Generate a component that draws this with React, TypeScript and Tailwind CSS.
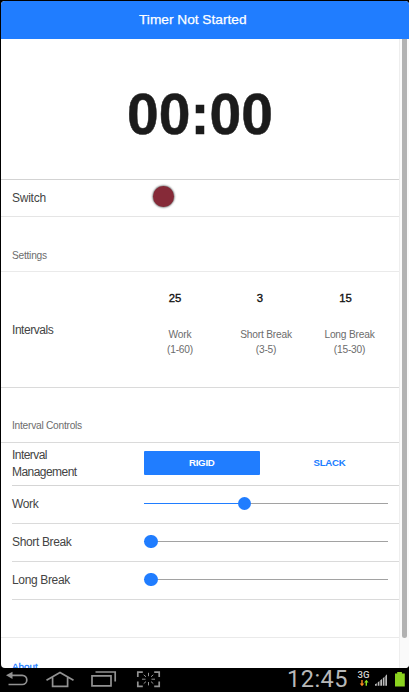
import type { ReactNode } from "react";

function Slider({ value }: { value: number }) {
  return (
    <div className="relative mt-[11px] h-[14px] w-[244px]">
      <div className="absolute top-[6px] h-px w-full bg-[#a2a2a2]" />
      <div className="absolute top-[6px] h-px bg-[#207dff]" style={{ width: value + 7 }} />
      <div className="absolute top-[-0.3px] size-[13.5px] rounded-full bg-[#207dff]" style={{ left: value }} />
    </div>
  );
}

function SliderRow({ label, value }: { label: string; value: number }) {
  return (
    <div className="ml-[11px] flex h-[38px] border-b border-[#dadada]">
      <div className="w-[132px] pt-[10px] text-[12px] leading-4 tracking-[-0.35px] text-[#444]">{label}</div>
      <Slider value={value} />
    </div>
  );
}

function SectionTitle({ children, className }: { children: ReactNode; className: string }) {
  return <div className={`pl-[11px] text-[10.2px] leading-3 tracking-[-0.25px] text-[#6c6c6c] ${className}`}>{children}</div>;
}

function Interval({ value, name, range, className, valueClass }: { value: string; name: string; range: string; className: string; valueClass: string }) {
  return (
    <div className={`text-center ${className}`}>
      <div className={`text-[11.3px] leading-[14px] text-[#111] [-webkit-text-stroke:0.35px_#111] ${valueClass}`}>{value}</div>
      <div className="mt-[23px] text-[10.2px] leading-[14.5px] tracking-[-0.2px] whitespace-nowrap text-[#6c6c6c]">
        {name}
        <br />
        {range}
      </div>
    </div>
  );
}

function NavIcons() {
  return (
    <svg className="h-6 w-[170px]" viewBox="0 0 170 24" fill="none" stroke="#929292" strokeWidth="1.7">
      <path d="M10 7.3h12.2a4.6 4.6 0 0 1 0 9.2H8.5" />
      <path d="M6 7.3l6.5-3.6v7.2z" fill="#929292" stroke="none" />
      <path d="M46.5 12.3L60 4.5l13.5 7.8M52.6 9.5v8.8h15V9.5" />
      <path d="M92 7.8h19v10H92zM95.5 4h19.7v9.5" />
      <path d="M137.8 9V4.1h5M154.2 4.1h5V9M137.8 13.5v4.8h5M154.2 18.3h5v-4.8" />
      <path d="M148.5 4.8v3.4M148.5 14v3.4M142 11.2h3.5M151.5 11.2h3.5M143.7 6.8l2.3 2M153.3 6.8l-2.3 2M143.7 15.6l2.3-2M153.3 15.6l-2.3-2" strokeWidth="1" />
    </svg>
  );
}

function StatusIcons() {
  return (
    <svg className="h-6 w-[54px]" viewBox="355 0 54 24">
      <text x="357.6" y="10" fontSize="9.6" fill="#d0d0d0" fontFamily="Roboto, sans-serif" fontWeight="500">3G</text>
      <path d="M361.3 12h1.4v3.5h1.6l-2.3 2.7-2.3-2.7h1.6z" fill="#ff8b22" />
      <path d="M366.4 11.8l2.2 2.7H367v3.3h-1.4v-3.3h-1.5z" fill="#8ee01e" />
      <path d="M375 17.7v-1.4l1.8-1v2.4zM377.7 17.7v-3.2l1.7-1.4v4.6zM380.3 17.7v-5.4l1.7-1.4v6.8zM382.8 17.7v-7.5l1.7-1.5v9zM385.3 17.7V8l1.7-1.7v11.4z" fill="#bdbdbd" />
      <path d="M397.2 4h4.7v1.6h2.9v12.8H395V5.6h2.2z" fill="#8bd31f" />
    </svg>
  );
}

export default function App() {
  return (
    <div className="flex h-[692px] w-[409px] flex-col overflow-hidden bg-black font-['Liberation_Sans',Arial,sans-serif]">
      <div className="mt-px ml-px flex h-[667px] flex-col overflow-hidden rounded-[4px] bg-white">
        <header className="h-[38px] shrink-0 bg-[#207dff] pt-[11px] pl-[138px] text-[13.7px] leading-4 whitespace-nowrap text-white [-webkit-text-stroke:0.25px_white]">
          Timer Not Started
        </header>
        <div className="flex min-h-0 flex-1">
          <main className="w-[398px] overflow-hidden">
            <div className="h-[141px] border-b border-[#d3d3d3] pt-[43px] text-center text-[57px] leading-[64px] font-bold text-[#1b1b1b] [-webkit-text-stroke:0.5px_#1b1b1b]">
              00:00
            </div>
            <div className="flex h-[37px] border-b border-[#e5e5e5] pl-[11px]">
              <div className="w-[141px] pt-[10px] text-[12px] leading-4 tracking-[-0.25px] text-[#444]">Switch</div>
              <div className="mt-[6px] size-[21px] rounded-full bg-[#862a38] shadow-[0_0_2px_0.5px_rgba(0,0,0,0.6)]" />
            </div>
            <SectionTitle className="h-[55px] border-b border-[#eaeaea] pt-[33px]">Settings</SectionTitle>
            <div className="flex h-[116px] border-b border-[#dadada] pl-[11px]">
              <div className="w-[132px] pt-[50px] text-[12px] leading-4 tracking-[-0.45px] text-[#444]">Intervals</div>
              <div className="flex pt-[19px]">
                <Interval className="w-[72px]" valueClass="-translate-x-[5px]" value="25" name="Work" range="(1-60)" />
                <Interval className="w-[100px]" valueClass="-translate-x-[6px]" value="3" name="Short Break" range="(3-5)" />
                <Interval className="w-[67px]" valueClass="-translate-x-[4px]" value="15" name="Long Break" range="(15-30)" />
              </div>
            </div>
            <SectionTitle className="h-[55px] border-b border-[#dadada] pt-[32px]">Interval Controls</SectionTitle>
            <div className="ml-[11px] flex h-[43px] border-b border-[#d5d5d5]">
              <div className="w-[132px] pt-[4px] text-[12px] leading-[16.5px] tracking-[-0.55px] text-[#444]">
                Interval
                <br />
                Management
              </div>
              <div className="mt-[7.5px] flex h-[24.5px] text-center text-[9.7px] leading-[24.5px] font-bold tracking-[-0.25px]">
                <div className="w-[116.5px] rounded-[1px] bg-[#207dff] text-white">RIGID</div>
                <div className="w-[139px] text-[#207dff]">SLACK</div>
              </div>
            </div>
            <SliderRow label="Work" value={93.7} />
            <SliderRow label="Short Break" value={0} />
            <SliderRow label="Long Break" value={0} />
            <div className="h-[38px] border-b border-[#eaeaea]" />
            <div className="pt-[23px] pl-[11px] text-[9.8px] leading-3 text-[#207dff] [-webkit-text-stroke:0.3px_#207dff]">About</div>
          </main>
          <div className="flex w-[10px] justify-center border-l border-[#eee] bg-[#fafafa]">
            <div className="h-[599px] w-[5.5px] rounded-b-[3px] bg-[#b2b2b2]" />
          </div>
        </div>
      </div>
      <footer className="flex h-6 w-full shrink-0 items-start">
        <NavIcons />
        <div className="ml-[117px] w-[68px] font-[Roboto] text-[23.5px] leading-[23px] font-normal tracking-[0.5px] whitespace-nowrap text-[#b8b8b8]">12:45</div>
        <StatusIcons />
      </footer>
    </div>
  );
}
